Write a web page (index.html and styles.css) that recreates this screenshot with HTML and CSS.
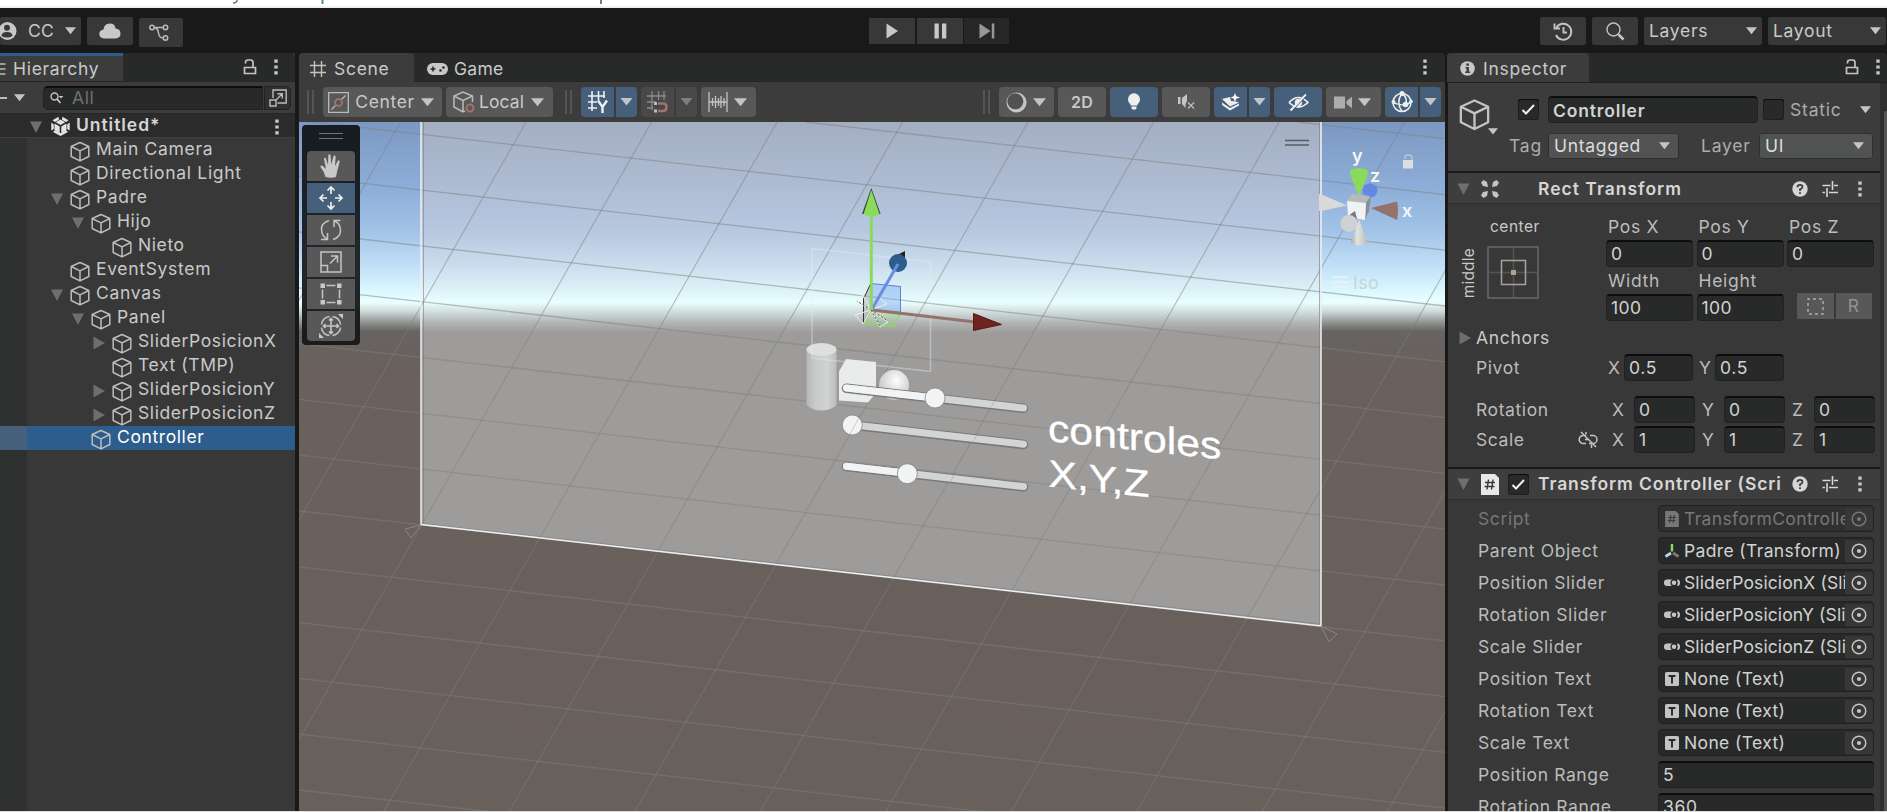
FILE: index.html
```html
<!DOCTYPE html>
<html lang="es">
<head>
<meta charset="utf-8">
<title>Untitled - Editor</title>
<link rel="stylesheet" href="styles.css">
</head>
<body>
<svg class="defs" aria-hidden="true">
  <symbol id="cube" viewBox="0 0 20 20"><path d="M10 1l8.800 4v10L10 19.400 1.200 15V5zM1.200 5L10 9.300 18.800 5M10 9.300v10" fill="none" stroke="currentColor" stroke-width="1.500" stroke-linejoin="round"/></symbol>
  <symbol id="down" viewBox="0 0 12 8"><path d="M0 0h12L6 7.500z" fill="currentColor"/></symbol>
  <symbol id="fold" viewBox="0 0 12 12"><path d="M0 .5h12L6 12z" fill="currentColor"/></symbol>
  <symbol id="closed" viewBox="0 0 12 14"><path d="M.5.500v13L12 7z" fill="currentColor"/></symbol>
  <symbol id="lock" viewBox="0 0 14 16"><path d="M2.500 4.500V3.500Q2.500 1 5 1h2.500Q10 1 10 3.500V8M1.500 8.500h11v6h-11z" fill="none" stroke="currentColor" stroke-width="1.700"/></symbol>
  <symbol id="dots" viewBox="0 0 4 16"><path d="M.3.500h3.400v3.200H.3zM.3 6.400h3.400v3.200H.3zM.3 12.300h3.400v3.200H.3z" fill="currentColor"/></symbol>
  <symbol id="check" viewBox="0 0 21 21"><path d="M4.500 11l3.500 3.500 8-8.500" fill="none" stroke="#eee" stroke-width="2"/></symbol>
  <symbol id="help" viewBox="0 0 16 16"><circle cx="8" cy="8" r="7.700" fill="currentColor"/><path d="M5.500 6.200Q5.500 3.900 8 3.900t2.500 2.200Q10.500 7.500 8 8.300v1.700M8 11.200v1.900" fill="none" stroke="#3c3c3c" stroke-width="1.800"/></symbol>
  <symbol id="tune" viewBox="0 0 16 16"><path d="M.5 4.500h8M12 4.500h4M10.500 0v9M.5 11.500H3M7 11.500h9M5 7v9" fill="none" stroke="currentColor" stroke-width="1.600"/></symbol>
  <symbol id="script" viewBox="0 0 18 21"><path d="M0 0h14l4 4v17H0z" fill="currentColor"/><path d="M7.500 5.500l-1.500 10M12 5.500l-1.500 10M4 8.500h10M3.500 12.500h10" stroke="#383838" stroke-width="1.400" fill="none"/></symbol>
  <symbol id="slider" viewBox="0 0 16 10"><rect y="1.500" width="10" height="6.500" rx="3" fill="currentColor"/><circle cx="10" cy="4.800" r="3.600" fill="#282a29"/><circle cx="10" cy="4.800" r="2.300" fill="currentColor"/><path d="M13 1.500q3 0 3 3.200t-3 3.300q1.500-3.300 0-6.500" fill="currentColor"/></symbol>
  <symbol id="textic" viewBox="0 0 14 14"><rect width="14" height="14" rx="1.500" fill="currentColor"/><path d="M3.500 4h7M7 3.500v8" stroke="#282a29" stroke-width="1.900"/></symbol>
  <symbol id="pick" viewBox="0 0 16 16"><circle cx="8" cy="8" r="6.800" fill="none" stroke="currentColor" stroke-width="1.500"/><circle cx="8" cy="8" r="2.100" fill="currentColor"/></symbol>
</svg>

<div class="above"><svg width="700" height="6"><path d="M237 0q0 3-4 3" fill="none" stroke="#6d7790" stroke-width="1.500"/><path d="M322.500 0v4" stroke="#5f8d76" stroke-width="2"/><path d="M601 0v4" stroke="#5f8d76" stroke-width="2"/></svg></div>

<header class="appbar">
  <div class="tb account"><svg width="18" height="20" viewBox="0 0 18 20"><circle cx="7.500" cy="10" r="9" fill="#c8c8c8"/><circle cx="7" cy="6.700" r="3" fill="#383838"/><path d="M1.500 15q0-4 5.500-4t5.500 4q-5.500 3-11 0" fill="#383838"/></svg><span>CC</span><svg class="dn" width="11" height="8"><use href="#down"/></svg></div>
  <div class="tb cloud"><svg width="22" height="16" viewBox="0 0 22 16"><path d="M5 15.500a4.500 4.500 0 0 1-.5-9Q5 .5 11 .5q5 0 5.500 5 5 .5 5 5t-5 5z" fill="#c8c8c8"/></svg></div>
  <div class="tb branch"><svg width="20" height="18" viewBox="0 0 20 18"><g fill="none" stroke="#b9bcbb" stroke-width="1.500"><circle cx="3" cy="3.500" r="2.200"/><circle cx="16.500" cy="3.500" r="2.200"/><circle cx="16.500" cy="14" r="2.200"/><path d="M5.200 3.500h9M5.200 3.500Q9 4 9.500 9t4.700 5"/></g></svg></div>
  <div class="tb play"><svg width="12" height="16"><path d="M.5.500L12 8 .5 15.500z" fill="#c8c8c8"/></svg></div>
  <div class="tb pause"><svg width="13" height="16"><path d="M.5.500h4.300v15H.5zM8 .5h4.300v15H8z" fill="#c8c8c8"/></svg></div>
  <div class="tb step"><svg width="16" height="16"><path d="M.5.500L11.500 8 .5 15.500zM12.800.5h2.500v15h-2.500z" fill="#979797"/></svg></div>
  <div class="tb hist"><svg width="20" height="19" viewBox="0 0 20 19"><path d="M3.500 5.500A8 8 0 1 1 3 13M1.500 1.500v5h5.500M10.500 5v5.500h3.500" fill="none" stroke="#c4c4c4" stroke-width="1.900"/></svg></div>
  <div class="tb find"><svg width="19" height="19" viewBox="0 0 19 19"><circle cx="7.500" cy="7.500" r="6.500" fill="none" stroke="#c4c4c4" stroke-width="1.400"/><path d="M12.500 12.500l5 5" stroke="#c4c4c4" stroke-width="2.600"/></svg></div>
  <div class="tb drop"><span>Layers</span><svg class="dn" width="11" height="8"><use href="#down"/></svg></div>
  <div class="tb drop"><span>Layout</span><svg class="dn" width="11" height="8"><use href="#down"/></svg></div>
</header>

<main class="work">
<section class="hier">
  <div class="tabs"><div class="tab htab"><svg width="6" height="14"><path d="M0 2h5.500M0 7h5.500M0 12h5.500" stroke="#b9bcbb" stroke-width="1.300"/></svg><span>Hierarchy</span></div><div class="grow"></div><svg class="lk" width="14" height="16"><use href="#lock"/></svg><svg class="dt" width="4" height="16"><use href="#dots"/></svg></div>
  <div class="hsearch"><i class="dash"></i><svg class="dn" width="11" height="8"><use href="#down"/></svg><div class="sbox"><svg width="14" height="12" viewBox="0 0 14 12"><circle cx="4.500" cy="4.500" r="3.500" fill="none" stroke="#c4c4c4" stroke-width="1.400"/><path d="M7 7l3.500 4" stroke="#c4c4c4" stroke-width="1.800"/><path d="M8.500 4h5L11 6.500z" fill="#c4c4c4"/></svg><span>All</span></div><div class="sext"><svg width="18" height="18" viewBox="0 0 18 18"><path d="M4 9V1h13.200v13H8.500M1 11h6v6H1zM7 11l6-6M8.500 4.700H13.300V9.500" fill="none" stroke="#b9bcbb" stroke-width="1.400"/></svg></div></div>
  <div class="tree">
    <div class="row top"><svg class="f" width="12" height="12"><use href="#fold"/></svg><svg class="ulogo" width="19" height="20" viewBox="0 0 19 20"><path d="M7.500.8L1.500 4.300 4 6l4-2.200zM11.500.8l6 3.500L15 6l-4-2.200zM.3 6.500v8L2.800 13V8.500zM18.700 6.500v8L16.200 13V8.500zM2 16l7.500 4 7.500-4-2-1.700-5.500 3-5.500-3z" fill="#e4e4e4"/><path d="M3.500 7.500l5.200 3v6.700l-5.200-3zM15.500 7.500l-5.200 3v6.700l5.200-3zM9.500 3.500L4.800 6.300l4.700 2.700 4.700-2.700z" fill="#e4e4e4"/></svg><b>Untitled*</b><svg class="dt" width="4" height="16"><use href="#dots"/></svg></div>
    <div class="row d0"><i></i><svg class="c"><use href="#cube"/></svg><span>Main Camera</span></div>
    <div class="row d0"><i></i><svg class="c"><use href="#cube"/></svg><span>Directional Light</span></div>
    <div class="row d0"><i><svg class="f" width="12" height="12"><use href="#fold"/></svg></i><svg class="c"><use href="#cube"/></svg><span>Padre</span></div>
    <div class="row d1"><i><svg class="f" width="12" height="12"><use href="#fold"/></svg></i><svg class="c"><use href="#cube"/></svg><span>Hijo</span></div>
    <div class="row d2"><i></i><svg class="c"><use href="#cube"/></svg><span>Nieto</span></div>
    <div class="row d0"><i></i><svg class="c"><use href="#cube"/></svg><span>EventSystem</span></div>
    <div class="row d0"><i><svg class="f" width="12" height="12"><use href="#fold"/></svg></i><svg class="c"><use href="#cube"/></svg><span>Canvas</span></div>
    <div class="row d1"><i><svg class="f" width="12" height="12"><use href="#fold"/></svg></i><svg class="c"><use href="#cube"/></svg><span>Panel</span></div>
    <div class="row d2"><i><svg class="f" width="12" height="14"><use href="#closed"/></svg></i><svg class="c"><use href="#cube"/></svg><span>SliderPosicionX</span></div>
    <div class="row d2"><i></i><svg class="c"><use href="#cube"/></svg><span>Text (TMP)</span></div>
    <div class="row d2"><i><svg class="f" width="12" height="14"><use href="#closed"/></svg></i><svg class="c"><use href="#cube"/></svg><span>SliderPosicionY</span></div>
    <div class="row d2"><i><svg class="f" width="12" height="14"><use href="#closed"/></svg></i><svg class="c"><use href="#cube"/></svg><span>SliderPosicionZ</span></div>
    <div class="row d1 sel"><i></i><svg class="c"><use href="#cube"/></svg><span>Controller</span></div>
  </div>
</section>

<section class="scene">
  <div class="tabs"><div class="tab stab"><svg width="16" height="16"><path d="M4.500 0v16M11.500 0v16M0 4.500h16M0 11.500h16" stroke="#c4c4c4" stroke-width="1.400"/></svg><span>Scene</span></div><div class="gtab"><svg width="21" height="12" viewBox="0 0 21 12"><rect width="21" height="12" rx="6" fill="#c8c8c8"/><path d="M3.500 6h5M6 3.500v5" stroke="#282a29" stroke-width="1.600"/><circle cx="13.500" cy="7.500" r="1.300" fill="#282a29"/><circle cx="16.500" cy="4.500" r="1.300" fill="#282a29"/></svg><span>Game</span></div><div class="grow"></div><svg class="dt" width="4" height="16"><use href="#dots"/></svg></div>
  <div class="stools">
    <i class="grip"></i>
    <div class="sb w119"><svg width="21" height="21" viewBox="0 0 21 21"><path d="M.7.700h19.600v19.600H.7zM3.500 17.500l4-4M13.500 7.500l4-4" fill="none" stroke="#b9bcbb" stroke-width="1.300"/><circle cx="10.500" cy="10.500" r="3.500" fill="none" stroke="#a0736b" stroke-width="1.800"/></svg><span>Center</span><svg class="dn" width="13" height="9"><use href="#down"/></svg></div>
    <div class="sb w107"><svg width="22" height="22" viewBox="0 0 22 22"><path d="M12 20l-2 1-9-5V5l9-4 9.500 4v6M1 5l9 4.500L19.500 5M10 9.500V21" fill="none" stroke="#b9bcbb" stroke-width="1.500"/><circle cx="17" cy="17" r="3.500" fill="none" stroke="#a0736b" stroke-width="2"/></svg><span>Local</span><svg class="dn" width="13" height="9"><use href="#down"/></svg></div>
    <i class="grip g2"></i>
    <div class="sb on l w33"><svg width="21" height="22" viewBox="0 0 21 22"><path d="M5 0v20M11.500 0v9M17 0v7M1 5h17M1 11h9M1 17h9" stroke="#f0f0f0" stroke-width="1.600"/><path d="M11 9.500l4.500 6.500 4.500-6.500M15.500 15v7" stroke="#f0f0f0" stroke-width="2.400" fill="none"/></svg></div>
    <div class="sb on r w21"><svg class="dn" width="13" height="8"><use href="#down"/></svg></div>
    <div class="sb off l w33"><svg width="21" height="22" viewBox="0 0 21 22"><path d="M5 0v19M11.500 0v9M17 0v9M0 5h19M0 11h9M0 17h6" stroke="#8a8a8a" stroke-width="1.300"/><path d="M11 12.500h5q3.500 0 3.500 3.700t-3.500 3.800h-5" stroke="#a0736b" stroke-width="2.600" fill="none"/><path d="M8.500 11v3M8.500 18.500v3" stroke="#b9bcbb" stroke-width="3"/></svg></div>
    <div class="sb off r w21"><svg class="dn" width="13" height="8"><use href="#down"/></svg></div>
    <div class="sb w55"><svg width="20" height="20"><path d="M1 0v20M19 0v20M4.500 6v8M7.500 4v12M10.500 6v8M13 4v12M16 6v8M1 10h18" stroke="#c4c4c4" stroke-width="1.300"/></svg><svg class="dn" width="13" height="9"><use href="#down"/></svg></div>
    <div class="grow"></div>
    <i class="grip"></i>
    <div class="sb w55"><svg width="21" height="21"><circle cx="10.500" cy="10.500" r="9.300" fill="#bfc1c0" stroke="#c8c8c8" stroke-width="1.500"/><circle cx="9.300" cy="9.300" r="8" fill="#515151"/></svg><svg class="dn" width="13" height="9"><use href="#down"/></svg></div>
    <div class="sb w48"><b>2D</b></div>
    <div class="sb on w48"><svg width="14" height="18"><circle cx="7" cy="6.200" r="6" fill="#eee"/><path d="M3.500 10h7v2.500h-7zM4.500 13.500h5v2q-2.500 2.500-5 0z" fill="#eee"/></svg></div>
    <div class="sb w48"><svg width="17" height="16" viewBox="0 0 17 16"><path d="M0 3h2.500v7H0zM4 4l5-4v7L7.500 10v4L4 10z" fill="#c4c4c4"/><path d="M10 8.500l6 6M16 8.500l-6 6" stroke="#b9bcbb" stroke-width="1.400"/></svg></div>
    <div class="sb on l w33"><svg width="18" height="18" viewBox="0 0 18 18"><path d="M0 6l8-2 1 4 5 .5 3 1L8 13.500zM0 9.500v2.500l8 5.500 9-5v-2l-9 4.500z" fill="#eee"/><path d="M13 0l1.200 3.300L18 4.500l-3.800 1.200L13 9l-1.200-3.300L8.500 4.500l3.300-1.200z" fill="#fff"/></svg></div>
    <div class="sb on r w21"><svg class="dn" width="13" height="8"><use href="#down"/></svg></div>
    <div class="sb on w48"><svg width="21" height="17" viewBox="0 0 21 17"><path d="M1 8.500Q10.500-1.500 20 8.500 10.500 17.500 1 8.500" fill="none" stroke="#eee" stroke-width="1.700"/><circle cx="10.500" cy="8.500" r="3.700" fill="#eee"/><path d="M2.500 16.500L18 .5" stroke="#eee" stroke-width="2"/><path d="M4.500 16.500L19.500 1" stroke="#46607c" stroke-width="1"/></svg></div>
    <div class="sb w55 cam"><svg width="18" height="13"><path d="M0 .5h11v12H0zM12.500 5L18 .8v11.500L12.500 8z" fill="#acaeae"/></svg><svg class="dn" width="13" height="9"><use href="#down"/></svg></div>
    <div class="sb on l w33"><svg width="22" height="22" viewBox="0 0 22 22"><circle cx="11" cy="11.500" r="9" fill="none" stroke="#eee" stroke-width="1.500"/><path d="M11 2.500Q4.500 11 11 20.500M11 2.500Q16.500 6 15 13M2 11q4 3 13 3l5-3" fill="none" stroke="#eee" stroke-width="1.500"/><circle cx="11" cy="2.500" r="2.500" fill="#eee"/><circle cx="2.500" cy="11" r="2" fill="#eee"/><circle cx="14.500" cy="13.500" r="2.800" fill="#eee"/><circle cx="20" cy="10.500" r="1.800" fill="#eee"/></svg></div>
    <div class="sb on r w21"><svg class="dn" width="13" height="8"><use href="#down"/></svg></div>
  </div>
  <div class="view">
    <svg class="world" width="1146" height="689" viewBox="299 122 1146 689">
      <defs>
        <linearGradient id="sky" gradientUnits="userSpaceOnUse" x1="0" y1="122" x2="0" y2="811">
          <stop offset="0" stop-color="#7b98c2"/><stop offset=".1" stop-color="#8eafd9"/><stop offset=".16" stop-color="#a3c4e8"/><stop offset=".21" stop-color="#c1e0f7"/><stop offset=".245" stop-color="#dbf7ff"/><stop offset=".262" stop-color="#ecffff"/><stop offset=".275" stop-color="#ccd9d7"/><stop offset=".292" stop-color="#8c8f8d"/><stop offset=".304" stop-color="#676462"/><stop offset=".36" stop-color="#69605c"/><stop offset=".45" stop-color="#6a605c"/><stop offset="1" stop-color="#68605a"/>
        </linearGradient>
        <linearGradient id="glass" gradientUnits="userSpaceOnUse" x1="0" y1="122" x2="0" y2="811">
          <stop offset="0" stop-color="#a3aec1"/><stop offset=".1" stop-color="#afbdd5"/><stop offset=".16" stop-color="#b7c8e0"/><stop offset=".21" stop-color="#cbdeee"/><stop offset=".245" stop-color="#ddf3f7"/><stop offset=".262" stop-color="#e8ffff"/><stop offset=".275" stop-color="#d2dfde"/><stop offset=".292" stop-color="#b0b4b3"/><stop offset=".306" stop-color="#9d9c9b"/><stop offset="1" stop-color="#9e9c9a"/>
        </linearGradient>
        <linearGradient id="cyl"><stop offset="0" stop-color="#b3b7b7"/><stop offset=".3" stop-color="#c8cbca"/><stop offset=".7" stop-color="#d1d3d2"/><stop offset="1" stop-color="#b9bcbb"/></linearGradient>
        <linearGradient id="cone"><stop offset="0" stop-color="#aaa"/><stop offset=".4" stop-color="#e2e2e2"/><stop offset="1" stop-color="#bbb"/></linearGradient>
        <radialGradient id="ball" cx=".58" cy=".35" r=".65"><stop offset="0" stop-color="#fff"/><stop offset=".3" stop-color="#ececec"/><stop offset="1" stop-color="#c4c4c4"/></radialGradient>
      </defs>
      <path d="M299 122h1146v689H299z" fill="url(#sky)"/>
      <path d="M421 122h900v504L421 524.500z" fill="url(#glass)"/>
      <path d="M423.500 122v401M1319.500 122v502M423 523.500l896 100.500" stroke="#7d7f85" stroke-width="1" opacity=".6" fill="none"/>

      <g class="gridlines">
        <path d="M299 120.400l1146 129.800M299 176.200l1146 129.800M299 232l1146 129.800M299 287.800l1146 129.800M299 343.600l1146 129.800M299 399.400l1146 129.800M299 455.200l1146 129.800M299 511l1146 129.800M299 566.800l1146 129.800M299 622.600l1146 129.800M299 678.400l1146 129.800M299 734.200l1146 129.800M299 790l1146 129.800M806 122l639 72.600M1298 122l147 16.600"/>
        <path class="steep" d="M400.600 122l-393.600 690M526.100 122l-393.600 690M651.600 122l-393.600 690M777.100 122l-393.600 690M902.600 122l-393.600 690M1028.100 122l-393.600 690M1153.600 122l-393.600 690M1279.100 122l-393.600 690M1404.600 122l-393.600 690M1530.100 122l-393.600 690M1655.600 122l-393.600 690M1781.100 122l-393.600 690"/>
      </g>

      <path d="M806.500 350v55q6 5.500 15 5.500t15-5.500v-55z" fill="url(#cyl)"/><ellipse cx="821.500" cy="349.500" rx="15" ry="6.500" fill="#dddedd"/>
      <path d="M846 359l30 3v31l-8 9.500-29-2v-29z" fill="#eaebeb"/>
      <circle cx="894" cy="385" r="15" fill="url(#ball)"/>
      <path d="M812 248.500l118.500 13.500v109.500L812 358z" fill="none" stroke="#e3edf5" stroke-opacity=".4" stroke-width="1.500"/>

      <g stroke-linecap="round" fill="none">
        <path d="M846.500 388.300l177 20" stroke="#77797a" stroke-width="9.500"/><path d="M846.500 388l177 20" stroke="#d3d5d4" stroke-width="7"/><path d="M846.500 388l88 10" stroke="#f1f3f4" stroke-width="7"/>
        <path d="M852 425l171.500 19.500" stroke="#77797a" stroke-width="9.500"/><path d="M852 424.700l171.500 19.500" stroke="#d3d5d4" stroke-width="7"/>
        <path d="M846.500 466.600l177 20.300" stroke="#77797a" stroke-width="9.500"/><path d="M846.500 466.300l177 20.300" stroke="#d3d5d4" stroke-width="7"/><path d="M846.500 466.300l61 7" stroke="#f1f3f4" stroke-width="7"/>
      </g>
      <g fill="#f1f3f4" stroke="#85888a" stroke-width=".8"><circle cx="935" cy="398" r="10"/><circle cx="852.300" cy="425" r="10"/><circle cx="907.300" cy="473.700" r="10"/></g>
      <g class="worldtext"><text transform="matrix(1.125 .118 0 1 1048 441)">controles</text><text transform="matrix(1.120 .118 0 1 1048.500 486.500)">X,Y,Z</text></g>
      <g fill="none" stroke="#808080" stroke-opacity=".35"><path d="M860.500 415l-11 20M997 397l-6 10M979.500 430l-6 11M955.500 472l-5 9.500"/></g>

      <path d="M421 122v402.500L1321 626V122" fill="none" stroke="#eef0f2" stroke-width="1.500"/>
      <path d="M421 525l-16 4 6 9zM1321 626l16 8-8 8z" fill="none" stroke="#8a8683" stroke-width="1"/>

      <g fill="none">
        <path d="M863.500 299l7-15v27l-7 13z" fill="#aaa" fill-opacity=".55" stroke="#3a2a2a"/>
        <path d="M871 283.500l29.500 3v26l-29.500-2.500z" fill="#7ba7ee" fill-opacity=".45" stroke="#5b80dd"/>
        <path d="M871 310l-7 13.500 29 3 7-12z" stroke="#8ada5c" fill="#8ada5c" fill-opacity=".18" stroke-width="1.300"/>
        <path d="M871 310l-15-9 7-6zM871 310l-16 5 8 9zM871 310l16-6-8-7zM871 310l17 12-8 5z" stroke="#eee" stroke-width="1"/><path d="M871 310l-14-9M871 310l17 11M871 310l9 16" stroke="#555" stroke-dasharray="2 2"/>
        <path d="M872.500 310L975 322" stroke="#93736c" stroke-width="3"/><path d="M973.500 313.500v17l28-6z" fill="#6e2320" stroke="#5a1714"/>
        <path d="M905 251v11l-10-6z" fill="#222"/><circle cx="898" cy="263" r="9" fill="#2c5d8c"/><path d="M872 309l26-45" stroke="#6c8de0" stroke-width="3"/>
        <path d="M871.300 310v-97" stroke="#8ada5c" stroke-width="3"/><path d="M862 214l9.300-26 9.300 26z" fill="#2f4a22"/><path d="M863.500 214q8 5 16 0l-8.200-24z" fill="#8ada5c"/>
      </g>

      <g>
        <ellipse cx="1370" cy="190.500" rx="7.500" ry="7" fill="#6288e3"/>
        <path d="M1350 170q9-4 18 0l-1 7-8 19-8-19z" fill="#8ada5c"/>
        <path d="M1319 194v17l5-.5 23-5-23-10z" fill="#d9d9d9"/>
        <path d="M1371 208l26-6.500q2 9 0 18.500z" fill="#93736c"/>
        <path d="M1359 219l8.500 24q-8 5-17 0z" fill="url(#cone)"/>
        <path d="M1347 201l5-7 18 2-4 7z" fill="#b7babb"/><path d="M1366 203l5-7-2 15-4 9z" fill="#8a8e90"/><path d="M1347 201l19 2-1 17-17-3z" fill="#eff3f5"/>
        <path d="M1348 216l7-5 2 8z" fill="#777"/><circle cx="1349" cy="223.500" r="8.500" fill="#cfd2d3"/>
        <g class="axis"><text x="1352" y="162">y</text><text x="1370" y="182">z</text><text x="1402" y="217">x</text></g>
        <path d="M1405 159v-1q0-3 3.500-3t3.500 3v3" fill="none" stroke="#bdc6d0" stroke-width="1.600"/><path d="M1403 160h10v8.500h-10z" fill="#dadfe2"/>
        <path d="M1333 277h15M1333 282h15M1333 287h15" stroke="#e9f5f8" stroke-width="1.600"/><text class="iso" x="1353" y="288.500">Iso</text>
        <path d="M1285 140.500h24M1285 145h24" stroke="#5c5c60" stroke-width="1.600"/>
      </g>
    </svg>
    <div class="palette">
      <i class="phandle"></i>
      <div class="pb first"><svg width="22" height="24" viewBox="0 0 22 24"><path d="M5.500 23Q4.500 18 .5 13q0-2 2-1.200L6 15 4 5q.2-1.700 1.800-1L8 11l.3-10Q9.500-.5 10.500 1l.8 9.500L13.500 2Q15 .8 15.700 2.500L15 12l3-5.500q1.500-.6 1.700 1L17 18l-1 5q-5 1.500-10.500 0" fill="#c8c8c8"/></svg></div>
      <div class="pb cur"><svg width="24" height="24" viewBox="0 0 24 24"><path d="M12 1v7M8.500 4.500L12 1l3.500 3.500M12 23v-7M8.500 19.500L12 23l3.500-3.500M1 12h7M4.500 8.500L1 12l3.500 3.500M23 12h-7M19.500 8.500L23 12l-3.500 3.500" fill="none" stroke="#f0f0f0" stroke-width="1.700"/></svg></div>
      <div class="pb"><svg width="22" height="22" viewBox="0 0 22 22"><path d="M9 1.500Q1 4 1.500 11t6 9M1 20.500h6.500V14M13 20.500q8-2.500 7.500-9.500t-6-9M20.500 1.500H14v6.500" fill="none" stroke="#c4c4c4" stroke-width="1.500"/></svg></div>
      <div class="pb"><svg width="22" height="22" viewBox="0 0 22 22"><path d="M1 1h20v20H1zM1 14.500h6.500V21M10 12.500l7-7M11 5h6.500v6.500" fill="none" stroke="#c4c4c4" stroke-width="1.500"/></svg></div>
      <div class="pb"><svg width="22" height="22" viewBox="0 0 22 22"><path d="M6.500 2.500h9M6.500 19.500h9M2.500 6.500v9M19.500 6.500v9" stroke="#c4c4c4" stroke-width="1.500"/><path d="M.5.500H5V5H.5zM17 .5h4.500V5H17zM.5 17H5v4.500H.5zM17 17h4.500v4.500H17z" fill="#c8c8c8"/></svg></div>
      <div class="pb last"><svg width="24" height="24" viewBox="0 0 24 24"><circle cx="12" cy="12" r="9.700" fill="none" stroke="#c4c4c4" stroke-width="1.500" stroke-dasharray="12 3.200" stroke-dashoffset="-1.500"/><path d="M12 4.500v15M4.500 12h15M10 6.500l2-2 2 2M10 17.500l2 2 2-2M6.500 10l-2 2 2 2M17.500 10l2 2-2 2" fill="none" stroke="#c4c4c4" stroke-width="1.600"/><path d="M19 0h5v5zM0 19v5h5z" fill="#c8c8c8"/></svg></div>
    </div>
  </div>
</section>

<section class="insp">
  <div class="tabs"><div class="tab itab"><svg width="15" height="15"><circle cx="7.500" cy="7.500" r="7.300" fill="#c8c8c8"/><path d="M6.300 2.500h2.600v2.200H6.300zM5.500 6h3.400v4.500h1.200v1.600H5.300v-1.600h1.200V7.500h-1z" fill="#3c3c3c"/></svg><span>Inspector</span></div><div class="grow"></div><svg class="lk" width="14" height="16"><use href="#lock"/></svg><svg class="dt" width="4" height="16"><use href="#dots"/></svg></div>
  <div class="ibody">
    <div class="props">
      <div class="ohead">
        <div class="bigcube"><svg width="31" height="33"><use href="#cube" width="31" height="33"/></svg><svg class="dn" width="10" height="7"><use href="#down"/></svg></div>
        <div class="olines">
          <div class="oline"><div class="cb oc"><svg width="21" height="21"><use href="#check"/></svg></div><div class="field name">Controller</div><div class="cb sc"></div><span class="dim st">Static</span><svg class="dn std" width="11" height="8"><use href="#down"/></svg></div>
          <div class="oline l2"><span class="dim">Tag</span><div class="dd tagdd">Untagged<svg class="dn" width="11" height="8"><use href="#down"/></svg></div><span class="dim lay">Layer</span><div class="dd laydd">UI<svg class="dn" width="11" height="8"><use href="#down"/></svg></div></div>
        </div>
      </div>
      <div class="chead c1"><svg class="f" width="13" height="12"><use href="#fold"/></svg><svg class="rti" width="18" height="18" viewBox="0 0 18 18"><path d="M2.500 0L0 2.500 2 6l5 1-1-5zM15.500 0L18 2.500 16 6l-5 1 1-5zM2.500 18L0 15.500 2 12l5-1-1 5zM15.500 18l2.500-2.500L16 12l-5-1 1 5z" fill="#c4c4c4"/></svg><b>Rect Transform</b><svg width="16" height="16"><use href="#help"/></svg><svg width="16" height="16"><use href="#tune"/></svg><svg class="dt" width="4" height="16"><use href="#dots"/></svg></div>
      <div class="rt">
        <div class="rtop">
          <div class="anch"><span class="ctr">center</span><span class="mid">middle</span><svg width="52" height="53"><path d="M1 1h50v51H1z" fill="none" stroke="#6f6867" stroke-width="1.500"/><path d="M26.500 2v49M2 26.500h49" stroke="#614f4d" stroke-width="1.500"/><path d="M14.500 14.500h24v24h-24z" fill="none" stroke="#a3a3a3" stroke-width="1.500"/><path d="M24 24h5v5h-5z" fill="#a5a788"/></svg></div>
          <div class="pos"><label>Pos X</label><label>Pos Y</label><label>Pos Z</label><div class="field">0</div><div class="field">0</div><div class="field">0</div><label>Width</label><label>Height</label><label></label><div class="field">100</div><div class="field">100</div><div class="rbtn"><div><svg width="17" height="17"><path d="M1 1h15v15H1z" fill="none" stroke="#aaa" stroke-width="1.500" stroke-dasharray="3 3" stroke-dashoffset="1"/></svg></div><div>R</div></div></div>
        </div>
        <div class="rrow anchors"><svg class="f" width="12" height="14"><use href="#closed"/></svg><span>Anchors</span></div>
        <div class="rrow piv"><span class="lab">Pivot</span><em>X</em><div class="field">0.5</div><em>Y</em><div class="field">0.5</div></div>
        <div class="rrow rot"><span class="lab">Rotation</span><em>X</em><div class="field">0</div><em>Y</em><div class="field">0</div><em>Z</em><div class="field">0</div></div>
        <div class="rrow rot sca"><span class="lab">Scale<svg width="19" height="16" viewBox="0 0 19 16"><path d="M7 3.500H5a4 4 0 0 0-1.500 8H7M10 11.500H14a4 4 0 0 0 0-8h-3M6 7.500h3M2 0l15 15M7 0v2.500M12.500 12.500V16" fill="none" stroke="#c4c4c4" stroke-width="1.500"/></svg></span><em>X</em><div class="field">1</div><em>Y</em><div class="field">1</div><em>Z</em><div class="field">1</div></div>
      </div>
      <div class="chead c2"><svg class="f" width="13" height="12"><use href="#fold"/></svg><svg class="sic" width="18" height="21"><use href="#script"/></svg><div class="cb"><svg width="21" height="21"><use href="#check"/></svg></div><b>Transform Controller (Scri</b><svg width="16" height="16"><use href="#help"/></svg><svg width="16" height="16"><use href="#tune"/></svg><svg class="dt" width="4" height="16"><use href="#dots"/></svg></div>
      <div class="fields">
        <div class="fr dis"><span>Script</span><div class="obj"><svg width="14" height="16"><use href="#script"/></svg><p>TransformController</p><u><svg width="16" height="16"><use href="#pick"/></svg></u></div></div>
        <div class="fr"><span>Parent Object</span><div class="obj"><svg width="14" height="14" viewBox="0 0 14 14"><path d="M7 0v7.500" stroke="#8ada5c" stroke-width="2.400"/><path d="M6 9l-5.500 3.500" stroke="#b4d4f5" stroke-width="2.800"/><path d="M8 9l5.500 3.500" stroke="#93736c" stroke-width="2.800"/></svg><p>Padre (Transform)</p><u><svg width="16" height="16"><use href="#pick"/></svg></u></div></div>
        <div class="fr"><span>Position Slider</span><div class="obj sl"><svg width="16" height="10"><use href="#slider"/></svg><p>SliderPosicionX (Sli</p><u><svg width="16" height="16"><use href="#pick"/></svg></u></div></div>
        <div class="fr"><span>Rotation Slider</span><div class="obj sl"><svg width="16" height="10"><use href="#slider"/></svg><p>SliderPosicionY (Sli</p><u><svg width="16" height="16"><use href="#pick"/></svg></u></div></div>
        <div class="fr"><span>Scale Slider</span><div class="obj sl"><svg width="16" height="10"><use href="#slider"/></svg><p>SliderPosicionZ (Sli</p><u><svg width="16" height="16"><use href="#pick"/></svg></u></div></div>
        <div class="fr"><span>Position Text</span><div class="obj"><svg width="14" height="14"><use href="#textic"/></svg><p>None (Text)</p><u><svg width="16" height="16"><use href="#pick"/></svg></u></div></div>
        <div class="fr"><span>Rotation Text</span><div class="obj"><svg width="14" height="14"><use href="#textic"/></svg><p>None (Text)</p><u><svg width="16" height="16"><use href="#pick"/></svg></u></div></div>
        <div class="fr"><span>Scale Text</span><div class="obj"><svg width="14" height="14"><use href="#textic"/></svg><p>None (Text)</p><u><svg width="16" height="16"><use href="#pick"/></svg></u></div></div>
        <div class="fr"><span>Position Range</span><div class="field">5</div></div>
        <div class="fr"><span>Rotation Range</span><div class="field">360</div></div>
      </div>
    </div>
    <div class="sbar"></div>
  </div>
</section>
</main>
</body>
</html>
```
FILE: styles.css
```css
* { box-sizing: border-box; }
html, body { height: 100%; }
body { margin: 0; width: 1887px; height: 812px; overflow: hidden; display: flex; flex-direction: column; background: #dcdcdc; font: 17.5px/24px Inter, "Liberation Sans", sans-serif; letter-spacing: .7px; color: #c8cac9; }
svg { display: block; flex: none; overflow: visible; }
.defs { position: absolute; width: 0; height: 0; }
span, b, label { white-space: nowrap; }
b { font-weight: 600; }
.grow { flex: 1; }
.dn { color: #c4c4c4; }
.f { color: #6e6e6e; }
.dt { color: #c8c8c8; }
.lk { color: #c4c4c4; }

.above { height: 8px; background: #fff; border-bottom: 2px solid #f0f0f0; flex: none; }

.appbar { height: 45px; flex: none; background: #191919; display: flex; align-items: flex-start; padding-top: 9px; }
.tb { height: 28px; background: #383838; border-radius: 2px; display: flex; align-items: center; justify-content: center; flex: none; }
.account { width: 81px; justify-content: flex-start; margin-right: 6px; }
.account span { margin-left: 10px; letter-spacing: .3px; width: 37px; }
.cloud { width: 46px; margin-right: 6px; }
.branch { width: 44px; height: 29px; margin-top: 1px; padding-right: 4px; }
.play, .pause, .step { height: 26px; margin-top: 1px; border-radius: 0; }
.play { width: 46px; margin-left: 686px; margin-right: 2px; }
.pause { width: 46px; margin-right: 1px; }
.step { width: 45px; background: #262827; }
.hist { width: 46px; margin-left: 531px; margin-right: 6px; }
.find { width: 46px; margin-right: 6px; }
.drop { width: 118px; justify-content: space-between; padding: 0 5px 0 5px; }
.drop + .drop { margin-left: 6px; }

.work { flex: none; height: 758px; display: flex; background: #191919; }
.tabs { height: 29px; flex: none; display: flex; align-items: center; background: #282a29; border-bottom: 1px solid #2b2424; border-radius: 4px 4px 0 0; }
.tab { height: 29px; background: #3c3c3c; display: flex; align-items: center; border-radius: 4px 4px 0 0; flex: none; margin-bottom: -1px; padding-top: 2px; }

.hier { width: 295px; margin-right: 4px; display: flex; flex-direction: column; background: #383838; flex: none; letter-spacing: .6px; }
.htab { width: 123px; border-top: 3px solid #2c5d8c; border-radius: 0; height: 28px; margin: 0; padding-top: 0; }
.htab span { margin-left: 7px; letter-spacing: .7px; }
.hier .tabs .lk { margin-right: 17px; }
.hier .tabs .dt { margin-right: 17px; }
.hsearch { height: 31px; background: #3c3c3c; display: flex; align-items: center; flex: none; }
.dash { width: 7px; height: 2px; background: #b9bcbb; margin-right: 7px; }
.sbox { width: 220px; height: 24px; margin-left: 18px; background: #282a29; border: 1px solid #222; border-top: 2px solid #0d0d0d; border-radius: 5px 0 0 5px; display: flex; align-items: center; padding-left: 6px; color: #6f7170; }
.sbox span { margin-left: 8px; }
.sext { width: 27px; height: 24px; margin-left: 1px; background: #303030; border: 1px solid #222; border-radius: 0 5px 5px 0; display: flex; align-items: center; justify-content: center; }
.tree { flex: 1; background: linear-gradient(90deg, #2f3130 27px, #383838 27px); }
.row { height: 24px; display: flex; align-items: center; }
.row i { display: block; width: 19px; flex: none; }
.row .c { width: 20px; height: 21px; color: #bdbdbd; margin: 2px 6px 0 0; }
.row i svg { margin-top: 2px; }
.row span { margin-top: -2px; }
.d0 { padding-left: 51px; } .d1 { padding-left: 72px; } .d2 { padding-left: 93px; }
.d0 span { letter-spacing: .68px; }
.row.top { height: 25px; background: #2b2b2b; padding-left: 30px; border-top: 1px solid #252525; border-bottom: 1px solid #414141; color: #d6d6d6; }
.top .f { margin-top: 2px; }
.ulogo { margin: 0 6px 0 9px; }
.top .dt { margin-left: auto; margin-right: 16px; margin-top: 2px; }
.top b { letter-spacing: .95px; margin-top: -2px; }
.sel { background: linear-gradient(90deg, #46607c 27px, #2c5d8c 27px); color: #fff; }

.scene { width: 1146px; margin-right: 2px; display: flex; flex-direction: column; flex: none; }
.stab { width: 115px; padding-left: 11px; }
.stab span { margin-left: 8px; }
.gtab { display: flex; align-items: center; margin-left: 13px; padding-top: 3px; }
.gtab span { margin-left: 6px; letter-spacing: .3px; }
.scene .tabs .dt { margin-right: 18px; }
.stools { height: 40px; background: #3c3c3c; display: flex; align-items: center; padding: 0 4px 0 8px; flex: none; }
.grip { width: 7px; height: 24px; border-left: 2px solid #555; border-right: 2px solid #555; margin-right: 9px; flex: none; }
.g2 { margin-left: 8px; }
.sb { height: 30px; background: #585858; border-radius: 4px; margin-right: 4px; display: flex; align-items: center; justify-content: center; flex: none; }
.sb:last-child { margin-right: 0; }
.sb.on { background: #46607c; }
.sb.off { background: #484848; }
.sb.off .dn { color: #7e7e7e; }
.sb.l { border-radius: 4px 0 0 4px; margin-right: 2px; }
.sb.r { border-radius: 0 4px 4px 0; }
.w33 { width: 33px; } .w21 { width: 21px; } .w48 { width: 48px; } .w55 { width: 55px; gap: 6px; padding-right: 2px; } .w119 { width: 119px; padding-right: 3px; } .w107 { width: 107px; padding-right: 2px; }
.w119 span { margin: 0 6px 0 6px; letter-spacing: .6px; }
.w107 span { margin: 0 7px 0 4px; letter-spacing: .1px; }
.sb b { font-size: 16px; letter-spacing: .3px; }
.view { flex: 1; position: relative; }
.world { overflow: hidden; }
.gridlines { fill: none; stroke: #808080; stroke-opacity: .5; stroke-width: 1.3; }
.steep { stroke-width: 1.1; }
.worldtext { font: 38px "Liberation Sans", sans-serif; letter-spacing: 0; fill: #fff; stroke: #fff; stroke-width: .3; }
.axis { font: 600 18px Inter, sans-serif; letter-spacing: 0; fill: #f4f6f8; }
.iso { font-size: 18px; letter-spacing: .3px; fill: #c9d3d6; }
.palette { position: absolute; left: 3px; top: 3px; width: 58px; height: 220px; border-radius: 4px; background: linear-gradient(rgba(15,18,22,.93), rgba(18,20,22,.9) 60%, #1b1b1b); padding: 8px 5px 0; }
.phandle { display: block; width: 24px; height: 6px; border-top: 1.500px solid #707274; border-bottom: 1.500px solid #707274; margin: 0 auto 12px; }
.pb { height: 30px; margin-bottom: 2px; background: #585858; display: flex; align-items: center; justify-content: center; }
.cur { background: #46607c; }
.first { border-radius: 4px 4px 0 0; } .last { border-radius: 0 0 4px 4px; }

.insp { flex: 1; display: flex; flex-direction: column; overflow: hidden; }
.itab { width: 142px; padding-left: 13px; }
.itab span { margin-left: 8px; }
.insp .lk { margin-right: 17px; }
.insp .tabs .dt { margin-right: 7px; }
.ibody { flex: 1; display: flex; min-height: 0; background: #303030; border-top: 1px solid #1f1f1f; margin-left: 1px; }
.props { width: 432px; background: #383838; overflow: hidden; flex: none; }
.sbar { flex: 1; margin-left: 4px; background: #555; margin-top: 28px; border-radius: 2px 0 0 0; }
.ohead { height: 88px; background: #3c3c3c; display: flex; }
.bigcube { width: 50px; padding: 15px 0 0 11px; color: #c4c4c4; flex: none; }
.bigcube .dn { margin: -3px 0 0 29px; }
.oline { display: flex; align-items: center; height: 27px; margin-top: 13px; }
.cb { width: 21px; height: 21px; background: #282a29; border-radius: 3px; box-shadow: inset 0 1px #0d0d0d, inset 0 0 0 1px #1f1f1f; flex: none; }
.oc { margin-left: 20px; }
.field { height: 27px; background: #282a29; border: 1px solid #212121; border-top: 2px solid #0d0d0d; border-radius: 4px; padding-left: 4px; line-height: 24px; color: #d2d2d2; flex: none; }
.name { width: 210px; margin-left: 9px; margin-right: 5px; font-weight: 600; line-height: 25px; letter-spacing: .85px; }
.dim { color: #aaacab; letter-spacing: .8px; }
.st { margin-left: 6px; width: 70px; }
.l2 { margin-top: 9px; padding-left: 11px; }
.dd { height: 26px; background: #515352; border: 1px solid #303030; border-radius: 3px; display: flex; align-items: center; justify-content: space-between; padding: 0 8px 0 5px; color: #dcdcdc; flex: none; }
.tagdd { width: 131px; margin-left: 7px; }
.l2 .dim { width: 32px; } .l2 .lay { width: 50px; margin-left: 22px; }
.laydd { width: 114px; margin-left: 8px; }
.chead { height: 33px; border-top: 2px solid #1a1a1a; border-bottom: 1px solid #303030; background: #3e3e3e; display: flex; align-items: center; padding-left: 9px; color: #d6d6d6; }
.chead b { margin-left: 39px; margin-right: 12px; width: 242px; letter-spacing: 1px; }
.c1 { padding-top: 1px; }
.rti { margin-left: 11px; }
.chead b + svg { margin-right: 14px; }
.chead .dt { margin-left: 20px; }
.c2 .sic { margin-left: 11px; color: #e8e8e8; }
.c2 .cb { margin-left: 9px; }
.c2 b { margin-left: 9px; letter-spacing: .9px; }

.rt { height: 263px; }
.rtop { display: flex; height: 120px; }
.anch { width: 158px; display: grid; grid-template: 27px 60px / 28px 1fr; padding: 11px 0 0 11px; flex: none; }
.anch .ctr { grid-column: 2; font-size: 15.500px; letter-spacing: .5px; margin-left: 3px; }
.mid { font-size: 15.500px; letter-spacing: .2px; writing-mode: vertical-rl; transform: rotate(180deg); justify-self: start; align-self: start; line-height: 24px; margin-left: -2px; margin-top: 6px; }
.anch > svg { margin: 4px 0 0 0; }
.pos { display: grid; grid-template: 26px 28px 26px 27px / 87px 87px 87px; column-gap: 3.500px; padding-top: 11px; }
.pos label { padding-left: 2px; color: #babcbb; }
.pos .rbtn { display: flex; gap: 2px; margin: -2px 2px 0 10px; height: 26px; }
.rbtn div { flex: 1; background: #585858; color: #929292; display: flex; align-items: center; justify-content: center; }
.pos .field { letter-spacing: .4px; margin-top: -1px; height: 27px; }
.rrow { display: flex; align-items: center; height: 27px; }
.anchors { padding-left: 11px; height: 28px; }
.anchors span { margin-left: 5px; }
.piv { margin-top: 2px; }
.lab { padding-left: 28px; width: 160px; color: #babcbb; flex: none; display: flex; align-items: center; justify-content: space-between; letter-spacing: .6px; }
.rrow em { font-style: normal; color: #babcbb; flex: none; }
.piv em { width: 16px; } .piv .field { width: 69px; margin-right: 6px; }
.rot { margin-top: 15px; }
.rot em { width: 22px; } .rot .field { width: 61px; margin-right: 7px; }
.rot .lab { width: 164px; }
.sca { margin-top: 3px; }
.sca .lab svg { margin-right: 14px; }

.fields { padding-top: 5px; }
.fr { display: flex; height: 27px; margin-bottom: 5px; align-items: center; }
.fr span { width: 210px; padding-left: 30px; flex: none; color: #babcbb; letter-spacing: .6px; }
.fr .field { width: 216px; }
.obj { width: 216px; height: 27px; background: #282a29; border: 1px solid #212121; border-radius: 4px; display: flex; align-items: center; padding-left: 6px; flex: none; color: #d2d2d2; }
.obj > svg { color: #c4c4c4; }
.obj p { margin: 0 0 0 5px; flex: 1; overflow: hidden; white-space: nowrap; line-height: 26px; letter-spacing: .36px; }
.obj.sl { padding-left: 5px; } .obj.sl p { margin-left: 4px; letter-spacing: .12px; }
.obj u { width: 28px; height: 22px; background: #373737; display: flex; align-items: center; justify-content: center; color: #c4c4c4; flex: none; }
.dis span, .dis .obj, .dis .obj svg { color: #777; }
.dis .obj { background: #303030; }
```
